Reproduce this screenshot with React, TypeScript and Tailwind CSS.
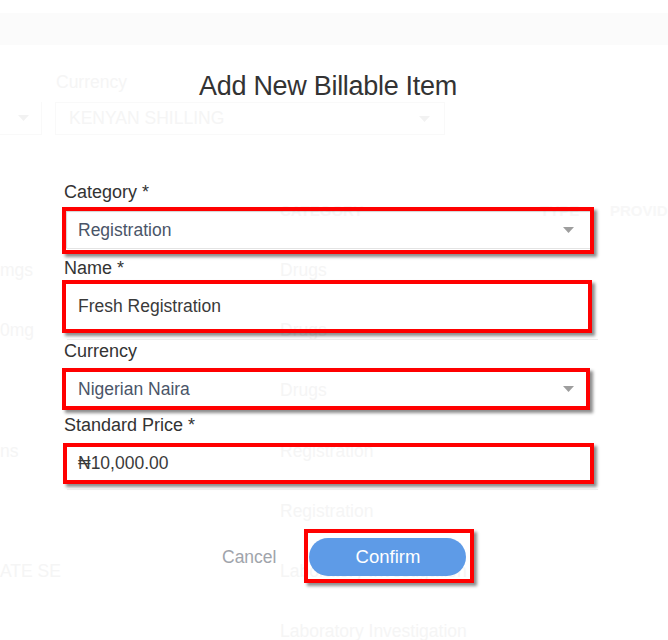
import { ReactNode } from 'react'

const font = { fontFamily: '"Liberation Sans", Arial, sans-serif' }

const Caret = ({ color = '#9e9e9e' }: { color?: string }) => (
  <svg width="11" height="6" viewBox="0 0 11 6" className="shrink-0">
    <path d="M0 0h11L5.5 6z" fill={color} />
  </svg>
)

// red annotation frame drawn around the fields
const Marked = ({ className, children }: { className: string; children: ReactNode }) => (
  <div className={`border-4 border-[#ff0000] shadow-[3px_3px_3px_rgba(0,0,0,0.45)] ${className}`}>
    {children}
  </div>
)

const rows = [
  { left: 'mgs', type: 'Drugs' },
  { left: '0mg', type: 'Drugs' },
  { left: '', type: 'Drugs' },
  { left: 'ns', type: 'Registration' },
  { left: '', type: 'Registration' },
  { left: 'ATE SE', type: 'Laboratory Investigation' },
  { left: '', type: 'Laboratory Investigation' },
]

const BackgroundPage = () => (
  <div className="text-[#f5f5f5] text-[17.5px]">
    <div className="h-[13px]" />
    <div className="h-[32px] bg-[#fbfbfb]" />

    {/* filter row */}
    <div className="flex mt-[27px] items-end">
      <div className="w-[42px] h-[33px] border-r border-b border-[#f9f9f9] flex items-center pl-[18px]">
        <Caret color="#f2f2f2" />
      </div>
      <div className="ml-[13px] flex flex-col">
        <span className="leading-[20px] mb-[10px] pl-[1px]">Currency</span>
        <div className="w-[390px] h-[33px] border border-[#f9f9f9] flex items-center justify-between pl-[13px] pr-[14px]">
          <span>KENYAN SHILLING</span>
          <Caret color="#f2f2f2" />
        </div>
      </div>
    </div>

    {/* table */}
    <div className="mt-[66px] flex h-[20px] items-center text-[15px] font-bold text-[#f7f7f7] whitespace-nowrap">
      <span className="w-[280px] shrink-0" />
      <span className="w-[260px] shrink-0">CATEGORY</span>
      <span className="w-[70px] shrink-0">TYPE</span>
      <span className="shrink-0">PROVIDER</span>
    </div>
    <div className="mt-[39px] flex flex-col">
      {rows.map((r, i) => (
        <div key={i} className="flex h-[60.2px] items-start leading-[20px]">
          <span className="w-[280px] shrink-0">{r.left}</span>
          <span>{r.type}</span>
        </div>
      ))}
    </div>
  </div>
)

export default function App() {
  return (
    <div className="relative w-[668px] h-[640px] overflow-hidden bg-white" style={font}>
      <BackgroundPage />

      {/* modal */}
      <div className="absolute inset-0 flex flex-col">
        <h1 className="mt-[70px] w-[656px] text-center text-[27px] leading-[32px] tracking-[-0.3px] text-[#333]">
          Add New Billable Item
        </h1>

        <div className="mt-[80px] ml-[62px] w-[540px] flex flex-col text-[18px] text-[#333]">
          <label className="leading-[20px] pl-[2px]">Category *</label>
          <Marked className="mt-[5px] w-[532px] h-[47px]">
            <div className="h-[38px] flex items-center justify-between pl-[12px] pr-[16px] border-b border-[#e4e4e4] shadow-[inset_1px_1px_1px_rgba(0,0,0,0.18)]">
              <span className="text-[17.5px] text-[#4a5568] mt-[2px]">Registration</span>
              <Caret />
            </div>
          </Marked>

          <label className="mt-[4px] leading-[20px] pl-[2px]">Name *</label>
          <Marked className="mt-[2px] w-[530px] h-[53px] flex items-center pl-[12px] shadow-[3px_3px_3px_rgba(0,0,0,0.45),inset_1px_1px_1px_rgba(0,0,0,0.18)]">
            <span className="text-[17.5px] text-[#3a3a3a]">Fresh Registration</span>
          </Marked>
          <div className="mt-[6px] ml-[5px] w-[531px] h-px bg-[#ececec]" />

          <label className="mt-[1px] leading-[20px] pl-[2px]">Currency</label>
          <Marked className="mt-[7px] w-[528px] h-[42px] flex items-center justify-between pl-[12px] pr-[12px]">
            <span className="text-[17.5px] text-[#4a5568] mt-[1px]">Nigerian Naira</span>
            <Caret />
          </Marked>

          <label className="mt-[5px] leading-[20px] pl-[2px]">Standard Price *</label>
          <Marked className="mt-[8px] ml-[1px] w-[531px] h-[41px] flex items-center pl-[11px] shadow-[3px_3px_3px_rgba(0,0,0,0.45),inset_1px_1px_1px_rgba(0,0,0,0.18)]">
            <span className="text-[17.5px] text-[#3a3a3a]">₦10,000.00</span>
          </Marked>
          <div className="mt-[5px] ml-[5px] w-[531px] h-px bg-[#ececec]" />
        </div>

        <div className="mt-[39px] ml-[222px] flex items-center">
          <button className="text-[17.5px] text-[#a0a4ab] leading-[20px] mt-[2px]">Cancel</button>
          <Marked className="ml-[28px] w-[170px] h-[54px] pt-[5px] pl-[1px]">
            <button className="w-[157px] h-[38px] rounded-full bg-[#5596e6]/95 text-white text-[18.5px]">
              Confirm
            </button>
          </Marked>
        </div>
      </div>
    </div>
  )
}
